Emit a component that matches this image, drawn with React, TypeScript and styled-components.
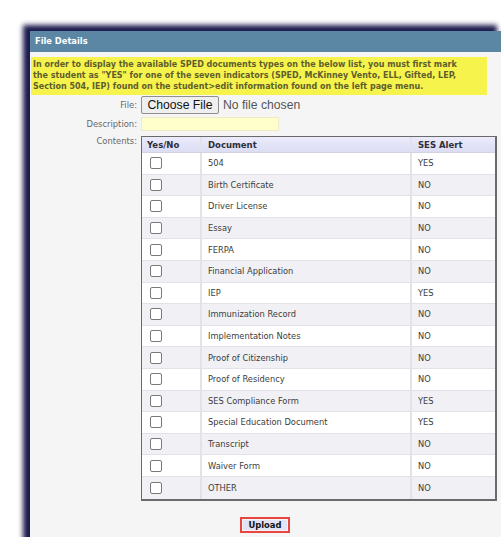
import React from 'react';
import styled, { createGlobalStyle } from 'styled-components';

const GlobalStyle = createGlobalStyle`
  html, body {
    margin: 0;
    padding: 0;
    background: #ffffff;
    overflow: hidden;
  }
  body {
    font-family: "DejaVu Sans", Verdana, sans-serif;
  }
`;

const Page = styled.div`
  width: 501px;
  height: 537px;
  padding: 31px 0 0 30px;
  box-sizing: border-box;
  overflow: hidden;
`;

const Panel = styled.div`
  width: 474px;
  height: 520px;
  background: #f5f5f6;
  box-shadow: -7px -6px 5px #1d1b4d;
`;

const Header = styled.div`
  height: 21px;
  background: #5b87a5;
  color: #ffffff;
  font-weight: bold;
  font-size: 8.3px;
  line-height: 21px;
  padding-left: 5px;
`;

const Banner = styled.div`
  margin: 5px 0 0 1px;
  width: 456px;
  box-sizing: border-box;
  padding: 2px 2px 3px 2px;
  background: #f6f44c;
  color: #5f5d2c;
  font-weight: bold;
  font-size: 8px;
  line-height: 11px;
  white-space: nowrap;
  overflow: hidden;
`;

const Form = styled.div`
  display: grid;
  grid-template-columns: 107px 1fr;
  column-gap: 4px;
  align-items: center;
  margin-top: 1px;
`;

const Label = styled.div<{ $top?: boolean }>`
  text-align: right;
  font-size: 8.4px;
  color: #666666;
  align-self: ${(p) => (p.$top ? 'start' : 'center')};
  padding-top: ${(p) => (p.$top ? '2px' : '0')};
`;

const FileRow = styled.div`
  display: flex;
  align-items: center;
  gap: 4px;
  font-family: "Liberation Sans", Arial, sans-serif;
`;

const ChooseButton = styled.div`
  width: 78px;
  height: 18px;
  box-sizing: border-box;
  border: 1px solid #8f8f8f;
  border-radius: 2px;
  background: #efefef;
  color: #111;
  font-size: 12.2px;
  line-height: 16px;
  text-align: center;
`;

const NoFile = styled.span`
  color: #555555;
  font-size: 12.2px;
`;

const DescInput = styled.div`
  width: 138px;
  height: 14px;
  box-sizing: border-box;
  margin: 3px 0;
  background: #ffffcc;
  border: 1px solid #ecebc4;
`;

const Table = styled.div`
  width: 356px;
  box-sizing: border-box;
  border: 1px solid #6a6a6a;
  border-right-width: 2px;
  border-bottom-width: 2px;
  margin-top: 2px;
  color: #3a3a3a;
`;

const Row = styled.div<{ $alt?: boolean; $head?: boolean }>`
  display: grid;
  grid-template-columns: 60px 210px 1fr;
  box-sizing: border-box;
  height: ${(p) => (p.$head ? '16px' : '21.6px')};
  background: ${(p) =>
    p.$head ? 'linear-gradient(#ebebfc, #dcdcf3)' : p.$alt ? '#f0f0f5' : '#ffffff'};
  font-weight: ${(p) => (p.$head ? 'bold' : 'normal')};
  font-size: ${(p) => (p.$head ? '8.5px' : '8.3px')};
  color: ${(p) => (p.$head ? '#2e2e3a' : '#3c3c3c')};
  border-bottom: 1px solid ${(p) => (p.$head ? '#d2d2e0' : '#e2e2e8')};
  &:last-child {
    border-bottom: none;
  }
`;

const Cell = styled.div<{ $pad?: number }>`
  display: flex;
  align-items: center;
  padding-left: ${(p) => p.$pad ?? 6}px;
  border-right: 2px solid #e2e2e8;
  white-space: nowrap;
  &:last-child {
    border-right: none;
  }
`;

const Box = styled.div`
  width: 12px;
  height: 12px;
  box-sizing: border-box;
  border: 1px solid #7a7a7a;
  border-radius: 2px;
  background: #ffffff;
`;

const Footer = styled.div`
  display: flex;
  justify-content: center;
  padding: 16px 0 0 0;
  margin-left: -4px;
`;

const UploadButton = styled.div`
  border: 2px solid #e8473f;
  padding: 1px;
  background: #f5f5f6;
`;

const UploadInner = styled.div`
  background: #e3e3f7;
  color: #111111;
  font-weight: bold;
  font-size: 8.4px;
  line-height: 10px;
  padding: 0 5px;
`;

const docs: [string, string][] = [
  ['504', 'YES'],
  ['Birth Certificate', 'NO'],
  ['Driver License', 'NO'],
  ['Essay', 'NO'],
  ['FERPA', 'NO'],
  ['Financial Application', 'NO'],
  ['IEP', 'YES'],
  ['Immunization Record', 'NO'],
  ['Implementation Notes', 'NO'],
  ['Proof of Citizenship', 'NO'],
  ['Proof of Residency', 'NO'],
  ['SES Compliance Form', 'YES'],
  ['Special Education Document', 'YES'],
  ['Transcript', 'NO'],
  ['Waiver Form', 'NO'],
  ['OTHER', 'NO'],
];

export default function App() {
  return (
    <Page>
      <GlobalStyle />
      <Panel>
        <Header>File Details</Header>
        <Banner>
          In order to display the available SPED documents types on the below list, you must first mark
          <br />
          the student as "YES" for one of the seven indicators (SPED, McKinney Vento, ELL, Gifted, LEP,
          <br />
          Section 504, IEP) found on the student&gt;edit information found on the left page menu.
        </Banner>
        <Form>
          <Label>File:</Label>
          <FileRow>
            <ChooseButton>Choose File</ChooseButton>
            <NoFile>No file chosen</NoFile>
          </FileRow>
          <Label>Description:</Label>
          <DescInput />
          <Label $top>Contents:</Label>
          <Table>
            <Row $head>
              <Cell $pad={5}>Yes/No</Cell>
              <Cell>Document</Cell>
              <Cell>SES Alert</Cell>
            </Row>
            {docs.map(([name, alert], i) => (
              <Row key={name} $alt={i % 2 === 1}>
                <Cell $pad={8}>
                  <Box />
                </Cell>
                <Cell>{name}</Cell>
                <Cell>{alert}</Cell>
              </Row>
            ))}
          </Table>
        </Form>
        <Footer>
          <UploadButton>
            <UploadInner>Upload</UploadInner>
          </UploadButton>
        </Footer>
      </Panel>
    </Page>
  );
}
